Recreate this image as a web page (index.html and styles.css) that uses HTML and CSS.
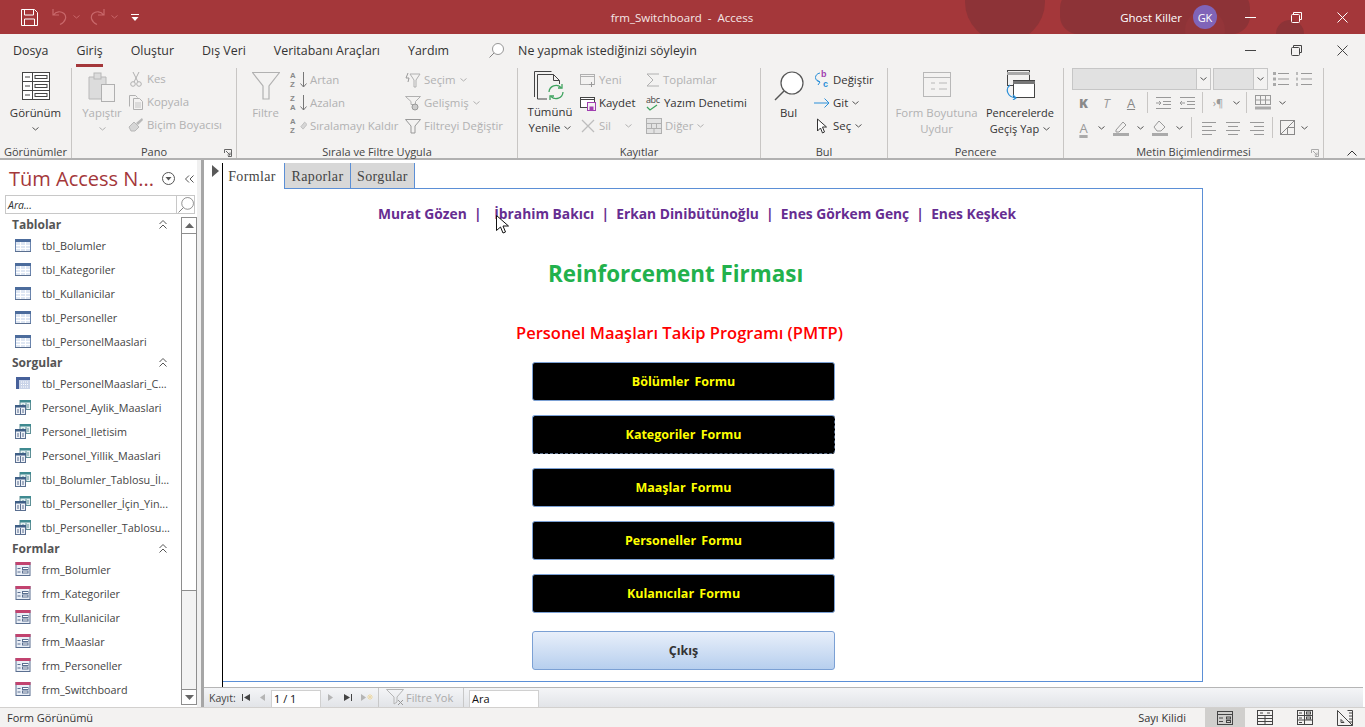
FILE: index.html
```html
<!DOCTYPE html>
<html lang="en">
<head>
    <meta charset="UTF-8">
    <title>frm_Switchboard - Access</title>
    <link rel="stylesheet" href="styles.css">
</head>
<body>
    <svg class="sprites" width="0" height="0">
        <defs>
            <symbol id="i-table" viewBox="0 0 16 13"><rect x=".5" y=".5" width="15" height="12" fill="#dfe7f3" stroke="#6a84ad"/><rect x="0" y="0" width="16" height="3" fill="#4c6c9c"/><path d="M1 6.5h14M1 9.5h14M5.500 3v9M10.500 3v9" stroke="#fff" fill="none"/><path d="M0 12.500h16" stroke="#5a6f90"/></symbol>
            <symbol id="i-crosstab" viewBox="0 0 14 12"><rect width="14" height="12" fill="#c9d3e8"/><rect width="14" height="3" fill="#46609a"/><rect y="3" width="3" height="9" fill="#46609a"/><path d="M5 5h8M5 7.500h8M5 10h8" stroke="#fff" stroke-dasharray="1 1"/></symbol>
            <symbol id="i-query" viewBox="0 0 16 15"><rect x="5" y=".5" width="10.500" height="9" fill="#e6f0f2" stroke="#5d8f96"/><rect x="5" y="0" width="11" height="2.500" fill="#3f8a90"/><path d="M11 3v6M7 5h2M7 7h2M12 5h2M12 7h2" stroke="#5d8f96" fill="none"/><rect x=".5" y="5.500" width="10" height="9" fill="#eef1f6" stroke="#5a6f90"/><rect y="5" width="11" height="2.500" fill="#3f5f86"/><path d="M5.500 8v6M2 10h2M2 12h2M7 10h2M7 12h2" stroke="#5a6f90" fill="none"/></symbol>
            <symbol id="i-form" viewBox="0 0 15 14"><rect x=".5" y=".5" width="14" height="13" fill="#e9eef6" stroke="#5a6f90"/><rect width="15" height="3" fill="#c2436f"/><path d="M2 6.500h3M2 10h3" stroke="#5a6f90"/><rect x="7" y="5.500" width="5.500" height="2" fill="#fff" stroke="#5a6f90"/><rect x="7" y="9" width="5.500" height="2" fill="#fff" stroke="#5a6f90"/></symbol>
            <symbol id="i-chev" viewBox="0 0 7 4"><path d="M.5.500l3 2.500 3-2.500" fill="none" stroke="currentColor"/></symbol>
            <symbol id="i-funnel" viewBox="0 0 28 28"><path d="M.5.500h27L17 14v13h-6V14z" fill="#f3f2f1" stroke="currentColor" stroke-width="1.200"/></symbol>
            <symbol id="i-search" viewBox="0 0 30 30"><circle cx="18" cy="12" r="11" fill="#fff" stroke="#555" stroke-width="1.200"/><path d="M10 20L1 29" stroke="#555" stroke-width="1.400"/></symbol>
            <symbol id="i-close" viewBox="0 0 11 11"><path d="M.5.500l10 10M10.500.500l-10 10" stroke="currentColor" fill="none"/></symbol>
            <symbol id="i-restore" viewBox="0 0 11 11"><path d="M2.500 2.500v-2h8v7h-2" fill="none" stroke="currentColor"/><rect x=".5" y="2.500" width="8" height="8" rx="1" fill="none" stroke="currentColor"/></symbol>
            <symbol id="i-lines-c" viewBox="0 0 16 14"><path d="M1 1.500h14M3 5.500h10M1 9.500h14M3 13.500h10" stroke="currentColor" fill="none"/></symbol>
            <symbol id="i-lines-l" viewBox="0 0 16 14"><path d="M1 1.500h14M1 5.500h10M1 9.500h14M1 13.500h10" stroke="currentColor" fill="none"/></symbol>
            <symbol id="i-lines-r" viewBox="0 0 16 14"><path d="M1 1.500h14M5 5.500h10M1 9.500h14M5 13.500h10" stroke="currentColor" fill="none"/></symbol>
        </defs>
    </svg>

    <!-- title bar -->
    <header class="titlebar">
        <svg class="title-art" width="420" height="34" viewBox="0 0 420 34"><circle cx="60" cy="2" r="40" fill="#8d3337"/><rect x="115" y="-10" width="190" height="44" rx="18" fill="#8d3337"/><circle cx="260" cy="30" r="20" fill="#933539"/><circle cx="345" cy="34" r="14" fill="#8d3337"/></svg>
        <div class="qat">
            <svg class="qat-save" width="17" height="17" viewBox="0 0 17 17"><path d="M.5.500h13l3 3v13H.5z" fill="none" stroke="#fff"/><path d="M3.500 1v5h9V1M3.500 16v-6h10v6" fill="none" stroke="#fff"/></svg>
            <svg class="qat-undo" width="15" height="18" viewBox="0 0 15 18"><path d="M1 1v6h6M1.500 7C4 3 9 3 12 5.500c3 3 2 8-4 11" fill="none" stroke="#c9686b" stroke-width="1.200"/></svg>
            <svg class="qat-chev" width="7" height="4"><use href="#i-chev"/></svg>
            <svg class="qat-redo" width="15" height="18" viewBox="0 0 15 18"><path d="M14 1v6H8M13.500 7C11 3 6 3 3 5.500c-3 3-2 8 4 11" fill="none" stroke="#c9686b" stroke-width="1.200"/></svg>
            <svg class="qat-chev" width="7" height="4"><use href="#i-chev"/></svg>
            <svg class="qat-more" width="8" height="7" viewBox="0 0 8 7"><path d="M0 .500h8" stroke="#fff"/><path d="M.5 3h7L4 7z" fill="#fff"/></svg>
        </div>
        <div class="doc-title">frm_Switchboard &nbsp;-&nbsp; Access</div>
        <div class="account">
            <span class="user-name">Ghost Killer</span>
            <span class="avatar">GK</span>
            <div class="win-controls">
                <span class="win-btn"><svg width="11" height="1"><path d="M0 .500h11" stroke="currentColor"/></svg></span>
                <span class="win-btn"><svg width="11" height="11"><use href="#i-restore"/></svg></span>
                <span class="win-btn"><svg width="11" height="11"><use href="#i-close"/></svg></span>
            </div>
        </div>
    </header>

    <!-- ribbon tabs -->
    <nav class="tabs">
        <span class="tab">Dosya</span>
        <span class="tab tab-active">Giriş</span>
        <span class="tab">Oluştur</span>
        <span class="tab">Dış Veri</span>
        <span class="tab">Veritabanı Araçları</span>
        <span class="tab">Yardım</span>
        <svg class="tell-icon" width="15" height="15"><use href="#i-search"/></svg>
        <span class="tell">Ne yapmak istediğinizi söyleyin</span>
        <div class="win-controls win-inner">
            <span class="win-btn"><svg width="11" height="1"><path d="M0 .500h11" stroke="currentColor"/></svg></span>
            <span class="win-btn"><svg width="11" height="11"><use href="#i-restore"/></svg></span>
            <span class="win-btn"><svg width="11" height="11"><use href="#i-close"/></svg></span>
        </div>
    </nav>

    <!-- ribbon -->
    <section class="ribbon">
        <div class="group g-views">
            <div class="group-body">
                <div class="big big-views">
                    <svg width="28" height="28" viewBox="0 0 28 28"><rect x=".5" y=".5" width="27" height="27" fill="#fff" stroke="#444"/><path d="M0 9.500h28M0 18.500h28M10.500 0v28" stroke="#444"/><path d="M3 5h5M3 14h5M3 23h5" stroke="#444"/><rect x="13" y="3.500" width="12" height="3" fill="none" stroke="#444"/><rect x="13" y="12.500" width="12" height="3" fill="none" stroke="#444"/><rect x="13" y="21.500" width="12" height="3" fill="none" stroke="#444"/></svg>
                    <span class="big-label">Görünüm</span>
                    <svg class="chev chev-big" width="7" height="4"><use href="#i-chev"/></svg>
                </div>
            </div>
            <div class="group-label">Görünümler</div>
        </div>

        <div class="group g-clip off">
            <div class="group-body">
                <div class="big big-paste">
                    <svg width="28" height="31" viewBox="0 0 28 31"><path d="M1 5h17v22H1z" fill="#dcdcdc" stroke="#b8b8b8"/><rect x="6" y="1" width="7" height="6" fill="#dcdcdc" stroke="#b8b8b8"/><rect x="13.500" y="12.500" width="13" height="17" fill="#f3f2f1" stroke="#b0b0b0"/></svg>
                    <span class="big-label">Yapıştır</span>
                    <svg class="chev chev-big" width="7" height="4"><use href="#i-chev"/></svg>
                </div>
                <div class="col col-clip">
                    <div class="small"><svg width="16" height="16" viewBox="0 0 16 16"><path d="M5 1l5 10M11 1L6 11" stroke="#b0b0b0" fill="none"/><circle cx="5" cy="13" r="2.300" fill="none" stroke="#b0b0b0"/><circle cx="11" cy="13" r="2.300" fill="none" stroke="#b0b0b0"/></svg>Kes</div>
                    <div class="small"><svg width="16" height="16" viewBox="0 0 16 16"><path d="M1.500 12.500v-11h6l2 2" fill="none" stroke="#b0b0b0"/><path d="M5.500 4.500h6l3 3v8h-9z" fill="#f3f2f1" stroke="#b0b0b0"/><path d="M7 9h6M7 11h6M7 13h6" stroke="#c4c4c4"/></svg>Kopyala</div>
                    <div class="small"><svg width="16" height="16" viewBox="0 0 16 16"><path d="M1 10l5-5 5 5-4 4H3z" fill="#d6d6d6" stroke="#b8b8b8"/><path d="M8 6l6-5 1 2-5 5z" fill="#b8b8b8"/></svg>Biçim Boyacısı</div>
                </div>
            </div>
            <div class="group-label on">Pano</div>
            <svg class="launcher" width="8" height="8" viewBox="0 0 8 8"><path d="M.5 4V.5H7.500V7.500H4M2 2l4 4M6 3.500V6H3.500" fill="none" stroke="#666"/></svg>
        </div>

        <div class="group g-sort off">
            <div class="group-body">
                <div class="big big-filter">
                    <svg width="28" height="28"><use href="#i-funnel"/></svg>
                    <span class="big-label">Filtre</span>
                </div>
                <div class="col col-sort">
                    <div class="small"><span class="az"><b>A</b><b>Z</b></span><svg class="sort-arrow" width="7" height="16" viewBox="0 0 7 16"><path d="M3.500 0v15M.5 11.500l3 3.500 3-3.500" fill="none" stroke="#777"/></svg>Artan</div>
                    <div class="small"><span class="az"><b>Z</b><b>A</b></span><svg class="sort-arrow" width="7" height="16" viewBox="0 0 7 16"><path d="M3.500 0v15M.5 11.500l3 3.500 3-3.500" fill="none" stroke="#777"/></svg>Azalan</div>
                    <div class="small"><span class="az"><b>A</b><b>Z</b></span><svg class="sort-arrow" width="7" height="10" viewBox="0 0 9 12"><path d="M1 7l5-6 3 3-5 6z" fill="#d6d6d6" stroke="#b8b8b8"/></svg>Sıralamayı Kaldır</div>
                </div>
                <div class="col col-filter">
                    <div class="small"><svg width="16" height="16" viewBox="0 0 16 16"><path d="M5 2h10l-4 6v7H9V8z" fill="none" stroke="#b0b0b0"/><path d="M3 1L1 6h3l-1 4" fill="none" stroke="#999"/></svg>Seçim<svg class="chev" width="7" height="4"><use href="#i-chev"/></svg></div>
                    <div class="small"><svg width="16" height="16" viewBox="0 0 16 16"><path d="M.5 1.500h15l-5 5v3H6v-3z" fill="none" stroke="#b0b0b0"/><circle cx="10" cy="12" r="3" fill="#ccc" stroke="#999"/></svg>Gelişmiş<svg class="chev" width="7" height="4"><use href="#i-chev"/></svg></div>
                    <div class="small"><svg width="16" height="16" viewBox="0 0 16 16"><path d="M.5 1.500h15L10 8v7H6V8z" fill="none" stroke="#999"/></svg>Filtreyi Değiştir</div>
                </div>
            </div>
            <div class="group-label on">Sırala ve Filtre Uygula</div>
        </div>

        <div class="group g-records">
            <div class="group-body">
                <div class="big big-refresh">
                    <svg width="32" height="30" viewBox="0 0 32 30"><path d="M.5 26V.5h17" fill="none" stroke="#444"/><path d="M3.500 28V3.500h16l6 6V13M3.500 28H13" fill="#f3f2f1" stroke="#444"/><path d="M19.500 3.500v6h6" fill="none" stroke="#444"/><path d="M15 21a7 7 0 0 1 12-4.500M29 21a7 7 0 0 1-12 4.500" fill="none" stroke="#3fa35f" stroke-width="1.300"/><path d="M28 13v4h-4M16 29v-4h4" fill="none" stroke="#3fa35f" stroke-width="1.300"/></svg>
                    <span class="big-label">Tümünü<br>Yenile<svg class="chev" width="7" height="4"><use href="#i-chev"/></svg></span>
                </div>
                <div class="col col-rec">
                    <div class="small off"><svg width="16" height="16" viewBox="0 0 16 16"><rect x=".5" y="2.500" width="14" height="10" fill="none" stroke="#b0b0b0"/><path d="M0 4.500h15" stroke="#b0b0b0"/><path d="M11.500 10v5M9 12.500h5" stroke="#999"/></svg>Yeni</div>
                    <div class="small"><svg width="16" height="16" viewBox="0 0 16 16"><rect x=".5" y="2.500" width="14" height="10" fill="#fff" stroke="#444"/><path d="M0 4.500h15" stroke="#444"/><rect x="7.500" y="7.500" width="8" height="8" fill="#f3f2f1" stroke="#a13eb0"/><rect x="9.500" y="11.500" width="4" height="4" fill="#a13eb0"/></svg>Kaydet</div>
                    <div class="small off"><svg width="16" height="16" viewBox="0 0 16 16"><path d="M2 2l12 12M14 2L2 14" stroke="#bdbdbd" stroke-width="1.300"/></svg>Sil<svg class="chev chev-sil" width="7" height="4"><use href="#i-chev"/></svg></div>
                </div>
                <div class="col col-tot">
                    <div class="small off"><svg width="14" height="14" viewBox="0 0 14 14"><path d="M13 1H1l6 6-6 6h12" fill="none" stroke="#b0b0b0"/></svg>Toplamlar</div>
                    <div class="small"><span class="abc">abc<svg width="12" height="7" viewBox="0 0 12 7"><path d="M1 3l3 3 7-5" fill="none" stroke="#3fa35f" stroke-width="1.300"/></svg></span>Yazım Denetimi</div>
                    <div class="small off"><svg width="16" height="16" viewBox="0 0 16 16"><rect x=".5" y=".5" width="15" height="15" fill="#e2e2e2" stroke="#b0b0b0"/><path d="M0 5.500h16M0 10.500h16M5.500 5v5M10.500 5v5M8 10v6" stroke="#b0b0b0"/></svg>Diğer<svg class="chev" width="7" height="4"><use href="#i-chev"/></svg></div>
                </div>
            </div>
            <div class="group-label">Kayıtlar</div>
        </div>

        <div class="group g-find">
            <div class="group-body">
                <div class="big big-find">
                    <svg width="30" height="30"><use href="#i-search"/></svg>
                    <span class="big-label">Bul</span>
                </div>
                <div class="col col-find">
                    <div class="small"><span class="repl"><span class="repl-b">b</span><span class="repl-c">c</span><svg width="8" height="13" viewBox="0 0 8 13"><path d="M6 1C0 2 0 9 6 10M3 8l3 2-2 3" fill="none" stroke="#2a8fd8"/></svg></span>Değiştir</div>
                    <div class="small"><svg width="16" height="10" viewBox="0 0 16 10"><path d="M0 5h15M10.500.500L15 5l-4.500 4.500" fill="none" stroke="#2a8fd8"/></svg>Git<svg class="chev" width="7" height="4"><use href="#i-chev"/></svg></div>
                    <div class="small"><svg width="16" height="16" viewBox="0 0 16 16"><path d="M3.500 1v12l3-3 2 5 2-1-2-5h4z" fill="#fff" stroke="#333"/></svg>Seç<svg class="chev" width="7" height="4"><use href="#i-chev"/></svg></div>
                </div>
            </div>
            <div class="group-label">Bul</div>
        </div>

        <div class="group g-window">
            <div class="group-body">
                <div class="big big-fit off">
                    <svg width="28" height="26" viewBox="0 0 28 26"><rect x=".5" y=".5" width="27" height="24" fill="none" stroke="#b8b8b8"/><path d="M0 5.500h28M8 11h4M8 17h4M16 11h8M16 17h8" stroke="#b8b8b8"/></svg>
                    <span class="big-label">Form Boyutuna<br>Uydur</span>
                </div>
                <div class="big big-switch">
                    <svg width="30" height="30" viewBox="0 0 30 30"><rect x="2.500" y=".5" width="22" height="15" fill="#f3f2f1" stroke="#444"/><path d="M2 3.500h23" stroke="#aaa" stroke-width="3"/><rect x="8.500" y="10.500" width="21" height="17" fill="#fff" stroke="#444"/><path d="M8 12.500h22" stroke="#777" stroke-width="3"/><path d="M5 15c-5 4-3 12 6 13M8 25l3 3-3 2" fill="none" stroke="#2a8fd8" stroke-width="1.200"/></svg>
                    <span class="big-label">Pencerelerde<br>Geçiş Yap<svg class="chev" width="7" height="4"><use href="#i-chev"/></svg></span>
                </div>
            </div>
            <div class="group-label">Pencere</div>
        </div>

        <div class="group g-text">
            <div class="group-body fmt">
                <div class="fmt-row fmt-top">
                    <span class="combo combo-font"><i><svg class="chev" width="7" height="4"><use href="#i-chev"/></svg></i></span>
                    <span class="combo combo-size"><i><svg class="chev" width="7" height="4"><use href="#i-chev"/></svg></i></span>
                    <svg class="fmt-list" width="16" height="14" viewBox="0 0 16 14"><path d="M0 1.500h3M0 7h3M0 12.500h3" stroke="#aaa" stroke-width="3"/><path d="M5 1.500h11M5 7h11M5 12.500h11" stroke="#999"/></svg>
                    <svg class="fmt-list" width="16" height="14" viewBox="0 0 16 14"><path d="M0 1.500h3M0 7h3M0 12.500h3" stroke="#bbb" stroke-width="3" stroke-dasharray="2 1"/><path d="M5 1.500h11M5 7h11M5 12.500h11" stroke="#999"/></svg>
                </div>
                <div class="fmt-row">
                    <span class="cell w23 bold-k">K</span>
                    <span class="cell w23 ital-t">T</span>
                    <span class="cell w26 under-a">A</span>
                    <span class="fmt-sep"></span>
                    <span class="cell w24"><svg width="15" height="12" viewBox="0 0 15 12"><path d="M0 .500h15M7 4.500h8M7 7.500h8M0 11.500h15M0 6h5M3 4l2 2-2 2" fill="none" stroke="#999"/></svg></span>
                    <span class="cell w24"><svg width="15" height="12" viewBox="0 0 15 12"><path d="M0 .500h15M7 4.500h8M7 7.500h8M0 11.500h15M5 6H0M2 4L0 6l2 2" fill="none" stroke="#999"/></svg></span>
                    <span class="fmt-sep"></span>
                    <span class="cell w24 para">›¶</span>
                    <span class="cell w13"><svg class="chev" width="7" height="4"><use href="#i-chev"/></svg></span>
                    <span class="fmt-sep"></span>
                    <span class="cell w26"><svg width="16" height="15" viewBox="0 0 16 15"><rect x=".5" y=".5" width="15" height="9" fill="none" stroke="#999"/><path d="M0 5h16M5.500 0v10M10.500 0v10" stroke="#999"/><path d="M0 13h16" stroke="#aaa" stroke-width="3"/></svg></span>
                    <span class="cell w13"><svg class="chev" width="7" height="4"><use href="#i-chev"/></svg></span>
                </div>
                <div class="fmt-row">
                    <span class="cell w23 color-a">A</span>
                    <span class="cell w13"><svg class="chev" width="7" height="4"><use href="#i-chev"/></svg></span>
                    <span class="cell w26"><svg width="16" height="16" viewBox="0 0 16 16"><path d="M3 10l7-8 3 3-7 7H3z" fill="none" stroke="#999"/><path d="M0 14.500h16" stroke="#aaa" stroke-width="3"/></svg></span>
                    <span class="cell w13"><svg class="chev" width="7" height="4"><use href="#i-chev"/></svg></span>
                    <span class="cell w26"><svg width="16" height="16" viewBox="0 0 16 16"><path d="M2 7l5-6 6 6-4 4H5z" fill="none" stroke="#999"/><path d="M0 14.500h16" stroke="#aaa" stroke-width="3"/></svg></span>
                    <span class="cell w13"><svg class="chev" width="7" height="4"><use href="#i-chev"/></svg></span>
                    <span class="fmt-sep sep-low"></span>
                    <span class="cell w24"><svg width="16" height="14"><use href="#i-lines-l"/></svg></span>
                    <span class="cell w24"><svg width="16" height="14"><use href="#i-lines-c"/></svg></span>
                    <span class="cell w24"><svg width="16" height="14"><use href="#i-lines-r"/></svg></span>
                    <span class="fmt-sep"></span>
                    <span class="cell w22"><svg width="15" height="15" viewBox="0 0 15 15"><rect x=".5" y=".5" width="14" height="14" fill="none" stroke="#888"/><path d="M0 15L15 0M7.500 8v7M8 7.500h7" stroke="#888"/></svg></span>
                    <span class="cell w13"><svg class="chev" width="7" height="4"><use href="#i-chev"/></svg></span>
                </div>
            </div>
            <div class="group-label">Metin Biçimlendirmesi</div>
            <svg class="launcher off-launcher" width="8" height="8" viewBox="0 0 8 8"><path d="M.5 4V.5H7.500V7.500H4M2 2l4 4M6 3.500V6H3.500" fill="none" stroke="#aaa"/></svg>
        </div>
        <svg class="collapse" width="10" height="6" viewBox="0 0 10 6"><path d="M.5 5.500L5 1l4.500 4.500" fill="none" stroke="#333"/></svg>
    </section>

    <!-- navigation pane + form -->
    <main class="work">
        <aside class="navpane">
            <div class="nav-head">
                <span class="nav-title">Tüm Access N...</span>
                <svg width="13" height="13" viewBox="0 0 13 13"><circle cx="6.500" cy="6.500" r="6" fill="none" stroke="#555"/><path d="M3.500 5h6l-3 3.500z" fill="#555"/></svg>
                <svg class="nav-collapse" width="9" height="8" viewBox="0 0 9 8"><path d="M4 .500L.500 4 4 7.500M8.500.500L5 4l3.500 3.500" fill="none" stroke="#555"/></svg>
            </div>
            <div class="nav-search">
                <span class="nav-search-text">Ara...</span>
                <span class="nav-search-btn"><svg width="16" height="16"><use href="#i-search"/></svg></span>
            </div>
            <div class="nav-body">
                <div class="nav-list">
                    <div class="nav-group">Tablolar<svg width="8" height="9" viewBox="0 0 8 9"><path d="M.5 4L4 .5 7.500 4M.5 8.500L4 5l3.500 3.500" fill="none" stroke="#555"/></svg></div>
                    <div class="nav-item"><svg width="16" height="13"><use href="#i-table"/></svg>tbl_Bolumler</div>
                    <div class="nav-item"><svg width="16" height="13"><use href="#i-table"/></svg>tbl_Kategoriler</div>
                    <div class="nav-item"><svg width="16" height="13"><use href="#i-table"/></svg>tbl_Kullanicilar</div>
                    <div class="nav-item"><svg width="16" height="13"><use href="#i-table"/></svg>tbl_Personeller</div>
                    <div class="nav-item"><svg width="16" height="13"><use href="#i-table"/></svg>tbl_PersonelMaaslari</div>
                    <div class="nav-group">Sorgular<svg width="8" height="9" viewBox="0 0 8 9"><path d="M.5 4L4 .5 7.500 4M.5 8.500L4 5l3.500 3.500" fill="none" stroke="#555"/></svg></div>
                    <div class="nav-item"><svg width="16" height="12"><use href="#i-crosstab"/></svg>tbl_PersonelMaaslari_C...</div>
                    <div class="nav-item"><svg width="16" height="15"><use href="#i-query"/></svg>Personel_Aylik_Maaslari</div>
                    <div class="nav-item"><svg width="16" height="15"><use href="#i-query"/></svg>Personel_Iletisim</div>
                    <div class="nav-item"><svg width="16" height="15"><use href="#i-query"/></svg>Personel_Yillik_Maaslari</div>
                    <div class="nav-item"><svg width="16" height="15"><use href="#i-query"/></svg>tbl_Bolumler_Tablosu_İl...</div>
                    <div class="nav-item"><svg width="16" height="15"><use href="#i-query"/></svg>tbl_Personeller_İçin_Yin...</div>
                    <div class="nav-item"><svg width="16" height="15"><use href="#i-query"/></svg>tbl_Personeller_Tablosu...</div>
                    <div class="nav-group">Formlar<svg width="8" height="9" viewBox="0 0 8 9"><path d="M.5 4L4 .5 7.500 4M.5 8.500L4 5l3.500 3.500" fill="none" stroke="#555"/></svg></div>
                    <div class="nav-item"><svg width="16" height="14"><use href="#i-form"/></svg>frm_Bolumler</div>
                    <div class="nav-item"><svg width="16" height="14"><use href="#i-form"/></svg>frm_Kategoriler</div>
                    <div class="nav-item"><svg width="16" height="14"><use href="#i-form"/></svg>frm_Kullanicilar</div>
                    <div class="nav-item"><svg width="16" height="14"><use href="#i-form"/></svg>frm_Maaslar</div>
                    <div class="nav-item"><svg width="16" height="14"><use href="#i-form"/></svg>frm_Personeller</div>
                    <div class="nav-item"><svg width="16" height="14"><use href="#i-form"/></svg>frm_Switchboard</div>
                </div>
                <div class="scrollbar">
                    <span class="sb-btn"><svg width="9" height="5"><path d="M0 5l4.500-5L9 5z" fill="#666"/></svg></span>
                    <span class="sb-thumb"></span>
                    <span class="sb-btn sb-down"><svg width="9" height="5"><path d="M0 0l4.500 5L9 0z" fill="#666"/></svg></span>
                </div>
            </div>
        </aside>
        <div class="splitter"></div>

        <div class="doc">
            <div class="doc-main">
                <div class="selector"><svg width="7" height="12"><path d="M0 0l7 6-7 6z" fill="#595959"/></svg></div>
                <div class="form-area">
                    <div class="form-tabs">
                        <span class="form-tab form-tab-active">Formlar</span>
                        <span class="form-tab">Raporlar</span>
                        <span class="form-tab">Sorgular</span>
                    </div>
                    <div class="form-panel">
                        <p class="names"><span class="name-first">Murat Gözen &nbsp;|&nbsp; &nbsp;</span>İbrahim Bakıcı &nbsp;|&nbsp; Erkan Dinibütünoğlu &nbsp;|&nbsp; Enes Görkem Genç &nbsp;|&nbsp; Enes Keşkek</p>
                        <h1 class="firm">Reinforcement Firması</h1>
                        <h2 class="program">Personel Maaşları Takip Programı (PMTP)</h2>
                        <button class="form-btn">Bölümler Formu</button>
                        <button class="form-btn form-btn-focus">Kategoriler Formu</button>
                        <button class="form-btn">Maaşlar Formu</button>
                        <button class="form-btn">Personeller Formu</button>
                        <button class="form-btn">Kulanıcılar Formu</button>
                        <button class="form-btn exit-btn">Çıkış</button>
                    </div>
                </div>
                <svg class="cursor" width="13" height="19" viewBox="0 0 13 19"><path d="M.5.500v15l4-3.500 2.500 6 2.500-1-2.500-6h5.500z" fill="#fff" stroke="#111"/></svg>
            </div>
            <div class="record-bar">
                <span class="rec-label">Kayıt:</span>
                <span class="rec-nav w17"><svg width="8" height="7"><path d="M.5 0v7" stroke="#444"/><path d="M8 0L2 3.500 8 7z" fill="#444"/></svg></span>
                <span class="rec-nav w17"><svg width="5" height="7"><path d="M5 0L0 3.500 5 7z" fill="#b5b5b5"/></svg></span>
                <span class="rec-input rec-count">1 / 1</span>
                <span class="rec-nav w18"><svg width="5" height="7"><path d="M0 0l5 3.500L0 7z" fill="#b5b5b5"/></svg></span>
                <span class="rec-nav w18"><svg width="8" height="7"><path d="M0 0l6 3.500L0 7z" fill="#444"/><path d="M7.500 0v7" stroke="#444"/></svg></span>
                <span class="rec-nav w20"><svg width="12" height="9"><path d="M0 1l5 3.500L0 8z" fill="#b5b5b5"/><path d="M9 1v6M6 4h6M7 2l4 4M11 2L7 6" stroke="#ecd9a8"/></svg></span>
                <span class="rec-sep"></span>
                <svg class="rec-filter" width="19" height="17" viewBox="0 0 19 17"><path d="M.5.500h17L11 8v5l-3 2V8z" fill="none" stroke="#b5b5b5"/><path d="M12 11l5 5M17 11l-5 5" stroke="#999"/></svg>
                <span class="rec-filter-text">Filtre Yok</span>
                <span class="rec-sep rec-sep2"></span>
                <span class="rec-input rec-search">Ara</span>
                <span class="hscroll"></span>
            </div>
        </div>
    </main>

    <footer class="statusbar">
        <span>Form Görünümü</span>
        <span class="num-lock">Sayı Kilidi</span>
        <span class="view-btn view-on"><svg width="16" height="14" viewBox="0 0 16 14"><rect x=".5" y=".5" width="15" height="13" fill="none" stroke="#444"/><path d="M0 3.500h16M2 7h4M2 10.500h4" stroke="#444"/><rect x="9.500" y="6" width="4" height="2" fill="none" stroke="#444"/><rect x="9.500" y="9.500" width="4" height="2" fill="none" stroke="#444"/></svg></span>
        <span class="view-btn"><svg width="16" height="15" viewBox="0 0 16 15"><rect x=".5" y=".5" width="15" height="14" fill="none" stroke="#444"/><path d="M0 5.500h16M0 8.500h16M0 11.500h16M8 5v10M3 3h3M10 3h3" stroke="#444"/></svg></span>
        <span class="view-btn"><svg width="16" height="15" viewBox="0 0 16 15"><rect x=".5" y=".5" width="15" height="14" fill="none" stroke="#444"/><path d="M0 5.500h16M0 10h16M7.500 0v15M2 3h3M2 8h3M2 12.500h3" stroke="#444"/><rect x="9.500" y="2" width="4" height="2" fill="none" stroke="#444"/><rect x="9.500" y="7" width="4" height="2" fill="none" stroke="#444"/></svg></span>
        <span class="view-btn"><svg width="16" height="16" viewBox="0 0 16 16"><path d="M.5.500L15.500 15.500H.5zM4 9.500v3h3z" fill="none" stroke="#444"/><path d="M10.500.5h5v15M12 3h3M12 6h3M12 9h3M12 12h3" fill="none" stroke="#444"/></svg></span>
    </footer>
</body>
</html>
```

FILE: styles.css
```css
* {
    box-sizing: border-box;
}

html, body {
    margin: 0;
    height: 100%;
}

body {
    width: 1365px;
    height: 727px;
    overflow: hidden;
    display: flex;
    flex-direction: column;
    font-family: 'Open Sans', 'Liberation Sans', sans-serif;
    font-size: 11px;
    color: #333;
    background: #f3f2f1;
}

svg {
    display: block;
    flex: none;
}

.sprites {
    position: absolute;
}

/* title bar */
.titlebar {
    position: relative;
    height: 34px;
    flex: none;
    background: #a4373a;
    color: #fff;
    display: flex;
    align-items: center;
    overflow: hidden;
}

.title-art {
    position: absolute;
    right: 0;
    top: 0;
}

.qat {
    position: relative;
    display: flex;
    align-items: center;
    padding-left: 21px;
    width: 400px;
}

.qat-undo {
    margin-left: 14px;
}

.qat-redo {
    margin-left: 10px;
}

.qat-chev {
    margin-left: 6px;
    color: #c9686b;
}

.qat-more {
    margin-left: 13px;
}

.doc-title {
    position: relative;
    width: 564px;
    text-align: center;
    font-size: 11.5px;
    color: #f4e6e6;
}

.account {
    position: relative;
    margin-left: auto;
    display: flex;
    align-items: center;
}

.user-name {
    font-size: 11.5px;
    margin-right: 11px;
}

.avatar {
    width: 24px;
    height: 24px;
    border-radius: 50%;
    background: #8064b8;
    display: flex;
    align-items: center;
    justify-content: center;
    font-size: 11px;
    margin-right: 10px;
}

.win-controls {
    display: flex;
    align-items: center;
}

.win-btn {
    width: 46px;
    display: flex;
    justify-content: center;
    align-items: center;
    height: 20px;
}

/* ribbon tabs */
.tabs {
    height: 34px;
    flex: none;
    display: flex;
    align-items: center;
    padding: 0 0 2px 13px;
    gap: 28px;
    font-size: 12.4px;
    color: #333;
    position: relative;
}

.tab-active {
    position: relative;
}

.tab-active::after {
    content: "";
    position: absolute;
    left: 0;
    right: 0;
    top: 22px;
    height: 3px;
    background: #a4373a;
}

.tell-icon {
    margin-left: 12px;
}

.tell {
    margin-left: -14px;
}

.win-inner {
    position: absolute;
    right: 0;
    top: 6px;
    color: #444;
}

/* ribbon */
.ribbon {
    height: 92px;
    flex: none;
    display: flex;
    position: relative;
    border-bottom: 2px solid #b1b1b1;
    font-size: 11.4px;
}

.group {
    position: relative;
    display: flex;
    flex-direction: column;
    border-right: 1px solid #c8c6c4;
}

.group-body {
    display: flex;
    flex: 1;
}

.group-label {
    height: 12px;
    line-height: 12px;
    text-align: center;
    font-size: 11px;
    color: #444;
}

.off {
    color: #b1b1b1;
}

.group-label.on {
    color: #444;
}

.g-views { width: 72px; }
.g-clip { width: 165px; }
.g-sort { width: 281px; }
.g-records { width: 243px; }
.g-find { width: 127px; }
.g-window { width: 176px; }
.g-text { width: 260px; }

.launcher {
    position: absolute;
    right: 4px;
    bottom: 1px;
}

.collapse {
    position: absolute;
    left: 1347px;
    top: 82px;
}

.big {
    display: flex;
    flex-direction: column;
    align-items: center;
    padding-top: 4px;
}

.big-label {
    text-align: center;
    line-height: 16px;
}

.big-label .chev {
    display: inline-block;
    margin-left: 4px;
    vertical-align: 2px;
}

.chev {
    color: #555;
    margin-left: 1px;
}

.off .chev {
    color: #b1b1b1;
}

.chev-big {
    margin: 6px 0 0;
}

.big-views {
    width: 71px;
}

.big-views .big-label {
    margin-top: 5px;
}

.big-paste {
    width: 52px;
    margin-left: 4px;
}

.big-paste .big-label {
    margin-top: 2px;
}

.big-filter {
    width: 53px;
    padding-left: 4px;
}

.big-filter .big-label {
    margin-top: 5px;
}

.big-refresh {
    width: 62px;
    padding: 3px 0 0 2px;
}

.big-refresh .big-label {
    margin-top: 3px;
}

.big-find {
    width: 53px;
    padding: 3px 0 0 2px;
}

.big-find .big-label {
    margin-top: 4px;
}

.big-fit {
    width: 97px;
}

.big-fit .big-label {
    margin-top: 7px;
}

.big-switch {
    width: 70px;
    padding-top: 2px;
    color: #333;
    font-size: 11px;
}

.big-switch .big-label {
    margin-top: 5px;
}

.col {
    display: flex;
    flex-direction: column;
}

.small {
    height: 23px;
    display: flex;
    align-items: center;
    gap: 3px;
    white-space: nowrap;
    margin-top: 0;
}

.col-clip { margin-top: -1px; }
.col-sort { width: 115px; }
.col-rec { width: 66px; }

.az {
    display: flex;
    flex-direction: column;
    width: 8px;
    font-family: 'Liberation Sans', sans-serif;
    font-size: 7.8px;
    line-height: 9px;
    color: #888;
}

.az b {
    font-weight: 700;
}

.sort-arrow {
    margin-left: -1px;
}

.repl {
    position: relative;
    width: 16px;
    height: 16px;
    font-family: 'Liberation Sans', sans-serif;
    font-size: 9px;
    line-height: 10px;
    font-weight: 700;
    color: #2a8fd8;
}

.repl-b {
    position: absolute;
    left: 7px;
    top: -3px;
    color: #a13eb0;
}

.repl-c {
    position: absolute;
    left: 9px;
    top: 7px;
}

.chev-sil {
    margin-left: 11px;
}

.abc {
    width: 15px;
    font-size: 9px;
    line-height: 9px;
    color: #444;
    letter-spacing: -.4px;
}

/* text format group */
.fmt {
    flex-direction: column;
    padding: 0 0 0 8px;
    color: #999;
}

.fmt-row {
    display: flex;
    align-items: center;
    height: 25px;
}

.fmt-top {
    height: 22px;
    gap: 0;
}

.combo {
    display: flex;
    justify-content: flex-end;
    height: 22px;
    background: #e1e1e1;
    border: 1px solid #c6c6c6;
}

.combo i {
    width: 14px;
    background: #f3f2f1;
    border-left: 1px solid #c6c6c6;
    display: flex;
    align-items: center;
    justify-content: center;
}

.combo .chev {
    margin: 0;
}

.combo-font { width: 139px; }
.combo-size { width: 55px; margin-left: 2px; margin-right: 5px; }
.fmt-list { margin-right: 7px; }

.cell {
    display: flex;
    align-items: center;
    justify-content: center;
    height: 22px;
}

.cell .chev {
    margin: 0;
}

.w13 { width: 13px; }
.w22 { width: 22px; }
.w23 { width: 23px; }
.w24 { width: 24px; }
.w26 { width: 26px; }

.fmt-sep {
    width: 1px;
    height: 21px;
    background: #c8c6c4;
    margin: 0 3px;
}

.sep-low {
    margin: 0 5px;
}

.bold-k {
    font-weight: 800;
    font-size: 13px;
    color: #8a8a8a;
}

.ital-t {
    font-style: italic;
    font-size: 13px;
    color: #999;
}

.under-a {
    font-size: 13px;
    color: #888;
    text-decoration: underline;
}

.para {
    font-size: 11px;
}

.color-a {
    font-size: 13px;
    color: #999;
    text-decoration: underline;
    text-decoration-thickness: 3px;
    text-decoration-color: #aaa;
}

/* work area */
.work {
    flex: 1;
    display: flex;
    min-height: 0;
    background: #fff;
}

.navpane {
    width: 197px;
    flex: none;
    display: flex;
    flex-direction: column;
    background: #fff;
}

.nav-head {
    height: 33px;
    display: flex;
    align-items: center;
    padding: 4px 0 0 9px;
}

.nav-title {
    width: 153px;
    font-size: 20px;
    color: #a4373a;
    font-family: 'Open Sans', sans-serif;
    white-space: nowrap;
}

.nav-collapse {
    margin-left: 10px;
}

.nav-search {
    height: 19px;
    margin: 2px 2px 0 5px;
    border: 1px solid #c8c8c8;
    display: flex;
    align-items: center;
    justify-content: space-between;
}

.nav-search-text {
    padding-left: 2px;
    font-style: italic;
    font-size: 10.5px;
    color: #333;
}

.nav-search-btn {
    width: 18px;
    height: 17px;
    border-left: 1px solid #c8c8c8;
    display: flex;
    align-items: center;
    justify-content: center;
}

.nav-body {
    flex: 1;
    display: flex;
    min-height: 0;
}

.nav-list {
    width: 181px;
    padding: 1px 0 0 0;
}

.nav-group {
    height: 18px;
    display: flex;
    align-items: center;
    justify-content: space-between;
    padding: 0 14px 0 12px;
    font-weight: 700;
    font-size: 12px;
    color: #555;
}

.nav-item {
    height: 24px;
    display: flex;
    align-items: center;
    gap: 11px;
    padding-left: 15px;
    font-size: 10.8px;
    color: #444;
    white-space: nowrap;
    overflow: hidden;
}

.scrollbar {
    width: 16px;
    margin-top: 3px;
    height: 488px;
    border: 1px solid #8e8e8e;
    display: flex;
    flex-direction: column;
    background: #f3f3f3;
}

.sb-btn {
    height: 15px;
    flex: none;
    display: flex;
    align-items: center;
    justify-content: center;
    background: #fff;
}

.sb-thumb {
    height: 358px;
    flex: none;
    background: #fff;
    border-top: 1px solid #8e8e8e;
    border-bottom: 1px solid #8e8e8e;
}

.sb-down {
    margin-top: auto;
    border-top: 1px solid #8e8e8e;
}

.splitter {
    width: 7px;
    flex: none;
    background: #f0f0f0;
    border-right: 3px solid #a6a6a6;
}

/* document */
.doc {
    flex: 1;
    min-width: 0;
    display: flex;
    flex-direction: column;
    padding-top: 3px;
    background: #fff;
}

.doc-main {
    position: relative;
    flex: 1;
    display: flex;
    min-height: 0;
}

.selector {
    width: 19px;
    flex: none;
    border-right: 1px solid #000;
    padding: 2px 0 0 8px;
}

.form-area {
    flex: 1;
}

.form-tabs {
    height: 26px;
    display: flex;
}

.form-tab {
    height: 26px;
    width: 67px;
    padding-top: 6px;
    text-align: center;
    font-family: 'Liberation Serif', serif;
    font-size: 14px;
    letter-spacing: .35px;
    color: #444;
    background: #d8d8d8;
    border-right: 1px solid #5b8fd6;
    border-bottom: 1px solid #5b8fd6;
    border-left: 1px solid #5b8fd6;
    margin-left: -1px;
}

.form-tab:last-child {
    width: 65px;
}

.form-tab-active {
    width: 62px;
    margin-left: 0;
    padding-right: 3px;
    background: #fff;
    border-left: none;
    border-bottom: none;
}

.form-tabs::after {
    content: "";
    width: 788px;
    border-bottom: 1px solid #5b8fd6;
}

.form-panel {
    width: 980px;
    height: 493px;
    border-right: 1px solid #5b8fd6;
    border-bottom: 1px solid #5b8fd6;
    display: flex;
    flex-direction: column;
    align-items: flex-start;
}

.names {
    margin: 16px 0 0 155px;
    font-size: 13.8px;
    font-weight: 700;
    line-height: 18px;
    color: #662d91;
    white-space: nowrap;
}

.name-first {
    margin-right: 2px;
}

.firm {
    margin: 35px 0 0 325px;
    font-size: 22.4px;
    line-height: 32px;
    font-weight: 700;
    color: #22b14c;
}

.program {
    margin: 32px 0 0 293px;
    font-size: 16.500px;
    line-height: 22px;
    font-weight: 600;
    color: #ff0000;
}

.form-btn {
    width: 303px;
    height: 39px;
    flex: none;
    margin: 14px 0 0 309px;
    background: #000;
    color: #ffff00;
    border: 1px solid #7ba0d4;
    border-radius: 3px;
    font-family: 'Open Sans', sans-serif;
    font-size: 12.500px;
    font-weight: 700;
    word-spacing: 2px;
}

.program + .form-btn {
    margin-top: 18px;
}

.form-btn-focus {
    border-style: dashed;
    border-color: #5a6d88;
    border-top: 1px solid #7ba0d4;
    border-left: 1px solid #7ba0d4;
}

.exit-btn {
    margin-top: 18px;
    color: #333;
    background: linear-gradient(#e8effa, #b7cfee);
}

.cursor {
    position: absolute;
    left: 292px;
    top: 52px;
}

/* record bar */
.record-bar {
    height: 20px;
    flex: none;
    display: flex;
    align-items: center;
    margin-right: 2px;
    padding-left: 5px;
    border-top: 1px solid #b5b5b5;
    background: linear-gradient(#f4f5f7, #e2e4e8);
    font-size: 10.5px;
    color: #444;
}

.rec-label {
    width: 29px;
}

.rec-nav {
    display: flex;
    justify-content: center;
    height: 100%;
    align-items: center;
}

.w17 { width: 16px; }
.w18 { width: 18px; }
.w20 { width: 20px; }

.rec-input {
    height: 17px;
    margin-top: 2px;
    background: #fff;
    border: 1px solid #d0d0d0;
    border-bottom: none;
    color: #111;
    padding-left: 2px;
    line-height: 15px;
    font-size: 11px;
}

.rec-count {
    width: 50px;
    margin-left: 1px;
}

.rec-sep {
    width: 1px;
    height: 100%;
    background: #c8c8c8;
    margin-left: 1px;
}

.rec-filter {
    margin-left: 7px;
}

.rec-filter-text {
    color: #aaa;
    width: 57px;
    margin-left: 1px;
    font-size: 11px;
}

.rec-sep2 {
    margin-left: 0;
}

.rec-search {
    width: 70px;
    margin-left: 5px;
}

.hscroll {
    flex: 1;
    height: 100%;
    margin-left: 3px;
}

/* status bar */
.statusbar {
    height: 20px;
    flex: none;
    display: flex;
    align-items: center;
    padding-left: 7px;
    font-size: 11px;
    color: #333;
    border-top: 1px solid #d2d0ce;
}

.num-lock {
    margin-left: auto;
    margin-right: 19px;
}

.view-btn {
    width: 40px;
    height: 100%;
    display: flex;
    align-items: center;
    justify-content: center;
}

.view-on {
    background: #d0cfcd;
}
```
